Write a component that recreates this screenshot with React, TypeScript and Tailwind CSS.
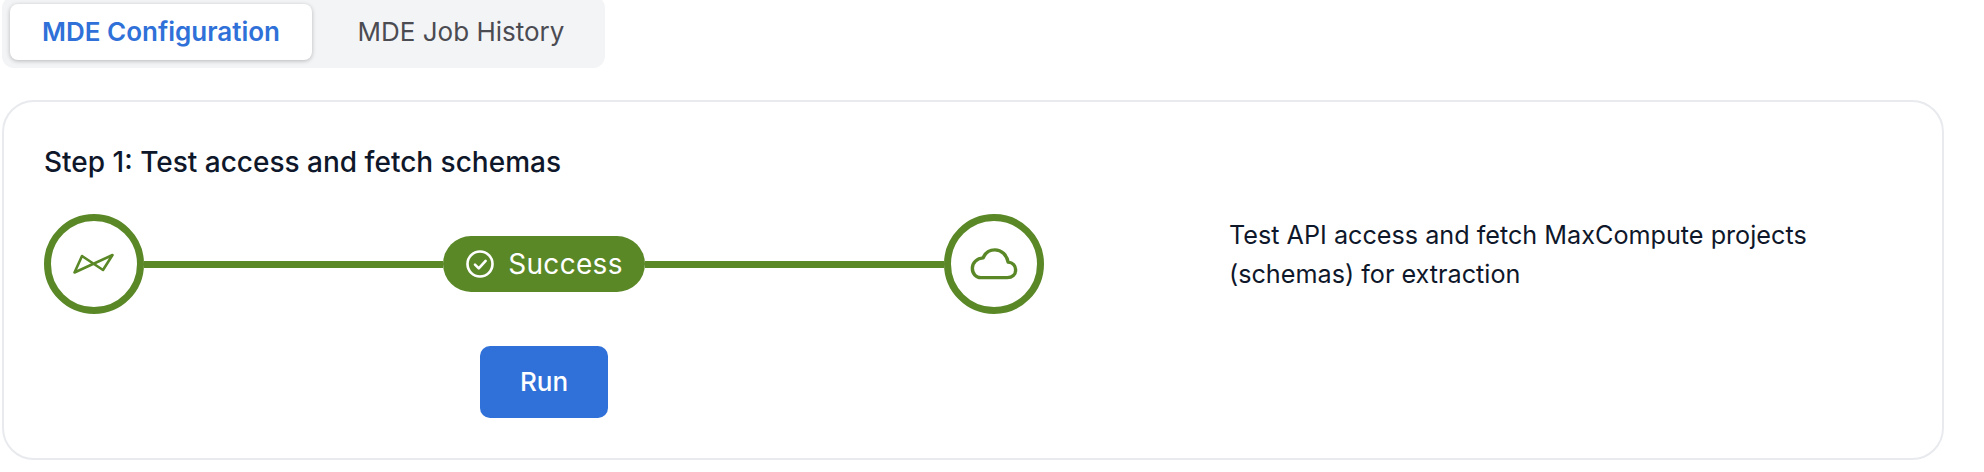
export default function App() {
  return (
    <div className="w-[1984px] h-[472px] overflow-hidden bg-white pl-[2px] pr-[40px] font-['Inter',sans-serif] text-[#0f172a]">
      <div className="-mt-1 flex h-[72px] w-[603px] items-stretch rounded-[12px] bg-[#f3f4f6] p-2">
        <button className="h-[56px] w-[302px] rounded-[8px] bg-white pb-[1px] text-[26px] font-semibold text-[#2f71d8] shadow-[0_1px_4px_rgba(0,0,0,0.25)]">
          MDE Configuration
        </button>
        <button className="h-[56px] flex-1 pb-[1px] pl-[13px] text-[26px] font-normal text-[#4b4b52]">MDE Job History</button>
      </div>
      <div className="mt-[32px] flex h-[360px] rounded-[32px] border-2 border-[#e8eaee] pl-[40px] pt-[42px]">
        <div className="w-[1000px]">
          <h2 className="text-[28px] leading-[36px] font-[450]">Step 1: Test access and fetch schemas</h2>
          <div className="mt-[34px] flex items-center">
            <div className="flex h-[100px] w-[100px] shrink-0 items-center justify-center rounded-full border-[7px] border-[#5a8827]">
              <svg width="42" height="22" viewBox="0 0 42 22" fill="none" stroke="#5a8827" strokeWidth="2.6" strokeLinejoin="round" strokeLinecap="round">
                <path d="M1.5 19.5 L9 3 L30 17 L39.5 2 L1.5 19.5 Z" />
              </svg>
            </div>
            <div className="h-[7px] flex-1 bg-[#5a8827]" />
            <div className="flex h-[56px] w-[202px] items-center justify-center gap-[13px] rounded-full bg-[#5a8827] text-[28px] tracking-[0.3px] text-white">
              <svg width="30" height="30" viewBox="0 0 24 24" fill="none" stroke="white" strokeWidth="2.1" strokeLinecap="round" strokeLinejoin="round">
                <circle cx="12" cy="12" r="10" />
                <path d="m8 12.5 3 3 5.5-6" />
              </svg>
              <span>Success</span>
            </div>
            <div className="h-[7px] flex-1 bg-[#5a8827]" />
            <div className="flex h-[100px] w-[100px] shrink-0 items-center justify-center rounded-full border-[7px] border-[#5a8827]">
              <svg width="50" height="32" viewBox="0 0 50 34" fill="none" stroke="#5a8827" strokeWidth="3.6" strokeLinejoin="round" strokeLinecap="round">
                <path d="M11 31.5 H39 C44.5 31.5 48 28 48 23.5 C48 19 45 15.5 40 15 C38.5 7.5 33 2 26 2 C20 2 15.5 5.5 13.5 10.5 C7 11 2 15.5 2 21.5 C2 27.5 6 31.5 11 31.5 Z" />
              </svg>
            </div>
          </div>
          <div className="mt-[32px] flex justify-center">
            <button className="h-[72px] w-[128px] rounded-[10px] bg-[#2f71d8] pb-[2px] text-[26px] font-medium text-white">Run</button>
          </div>
        </div>
        <p className="ml-[185px] mt-[72px] w-[640px] text-[25.2px] leading-[39px]">
          Test API access and fetch MaxCompute projects (schemas) for extraction
        </p>
      </div>
    </div>
  );
}
